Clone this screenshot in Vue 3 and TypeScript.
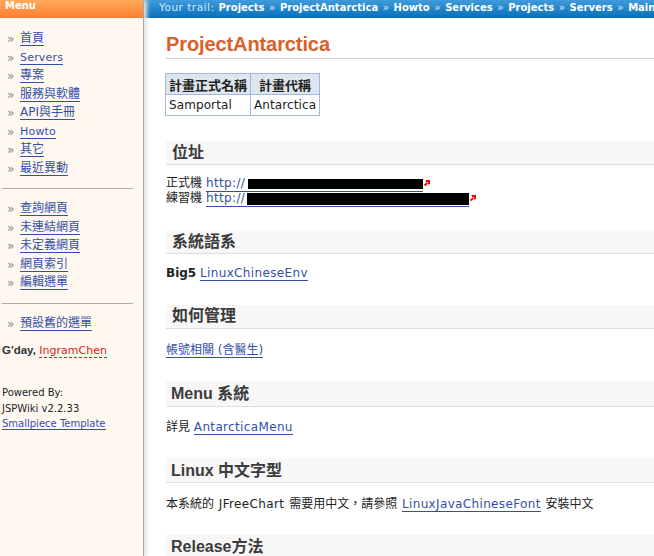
<script setup lang="ts">
interface Item { t: string; lat?: boolean }
const menu1: Item[] = [
  { t: '首頁' }, { t: 'Servers', lat: true }, { t: '專案' }, { t: '服務與軟體' },
  { t: 'API與手冊' }, { t: 'Howto', lat: true }, { t: '其它' }, { t: '最近異動' },
]
const menu2: string[] = ['查詢網頁', '未連結網頁', '未定義網頁', '網頁索引', '編輯選單']
const trail: string[] = ['Projects', 'ProjectAntarctica', 'Howto', 'Services', 'Projects', 'Servers', 'Main']
</script>

<template>
  <div class="page">
    <aside class="side">
      <div class="menu-bar">Menu</div>
      <div class="side-body">
        <ul class="list">
          <li v-for="m in menu1" :key="m.t"><span class="mark">»</span><a class="lnk" :class="{ lat: m.lat }">{{ m.t }}</a></li>
        </ul>
        <hr class="rule" />
        <ul class="list">
          <li v-for="m in menu2" :key="m"><span class="mark">»</span><a class="lnk">{{ m }}</a></li>
        </ul>
        <hr class="rule" />
        <ul class="list one">
          <li><span class="mark">»</span><a class="lnk">預設舊的選單</a></li>
        </ul>
        <div class="gday"><b>G'day,</b> <span class="user">IngramChen</span></div>
        <div class="powered">
          <div>Powered By:</div>
          <div>JSPWiki v2.2.33</div>
          <div><a class="lnk">Smallpiece Template</a></div>
        </div>
      </div>
    </aside>
    <div class="right">
      <div class="trail">
        <span class="your">Your trail:</span>
        <template v-for="(t, i) in trail" :key="i">
          <span v-if="i > 0" class="sep">»</span><b class="crumb">{{ t }}</b>
        </template>
      </div>
      <main class="content">
        <h1 class="title">ProjectAntarctica</h1>
        <table class="tbl">
          <thead>
            <tr><th class="c1">計畫正式名稱</th><th class="c2">計畫代稱</th></tr>
          </thead>
          <tbody>
            <tr><td>Samportal</td><td>Antarctica</td></tr>
          </tbody>
        </table>

        <h2 class="hd first">位址</h2>
        <div class="urls">
          <div class="url">正式機 <a class="lnk wide">http://<span class="black b1"></span></a><svg class="ext" width="6" height="6" viewBox="0 0 6 6"><path d="M0.6 5.6 L3.2 3 M1.8 1 H5 V4.2" fill="none" stroke="#f00" stroke-width="2" /></svg></div>
          <div class="url">練習機 <a class="lnk wide">http://<span class="black b2"></span></a><svg class="ext" width="6" height="6" viewBox="0 0 6 6"><path d="M0.6 5.6 L3.2 3 M1.8 1 H5 V4.2" fill="none" stroke="#f00" stroke-width="2" /></svg></div>
        </div>

        <h2 class="hd s2">系統語系</h2>
        <p class="para p2"><b>Big5</b> <a class="lnk wide">LinuxChineseEnv</a></p>

        <h2 class="hd s3">如何管理</h2>
        <p class="para p3"><a class="lnk">帳號相關 (含醫生)</a></p>

        <h2 class="hd s4">Menu 系統</h2>
        <p class="para p4">詳見 <a class="lnk wide">AntarcticaMenu</a></p>

        <h2 class="hd s5">Linux 中文字型</h2>
        <p class="para p5">本系統的 <span class="wide">JFreeChart</span> 需要用中文，請參照 <a class="lnk wide">LinuxJavaChineseFont</a> 安裝中文</p>

        <h2 class="hd s6">Release方法</h2>
      </main>
    </div>
  </div>
</template>

<style>
html, body { margin: 0; padding: 0; background: #fff; }
</style>

<style scoped>
.page {
  display: flex;
  width: 654px;
  height: 556px;
  overflow: hidden;
  font-family: "DejaVu Sans", "Noto Sans CJK TC", sans-serif;
  font-size: 12px;
  color: #222;
  background: #fff;
}
.side {
  flex: 0 0 143px;
  width: 143px;
  height: 556px;
  background: #fff8f1;
  border-right: 1px solid #a8a8a8;
  box-shadow: 3px 0 4px #e4e4e4;
  position: relative;
  z-index: 1;
}
.menu-bar {
  height: 17px;
  padding-left: 5px;
  font: bold 10px/12px "DejaVu Sans", sans-serif;
  color: #fff;
  background: linear-gradient(#ffa95c, #ff8133);
  border-bottom: 1px solid #e87a3c;
  overflow: hidden;
}
.side-body { padding: 12px 2px 0; }
.list { list-style: none; margin: 0; padding: 0; }
.list li {
  display: flex;
  align-items: center;
  height: 18.5px;
  padding-left: 5px;
  white-space: nowrap;
}
.mark {
  width: 13px;
  color: #888;
  font-size: 12px;
  line-height: 12px;
}
.lnk {
  color: #3350a8;
  border-bottom: 1px solid #3350a8;
  line-height: 13px;
  display: inline-block;
}
.lnk.lat { font-size: 11px; letter-spacing: 0.2px; }
.wide { letter-spacing: 0.35px; }
.rule {
  border: 0;
  height: 1px;
  background: #b0aca8;
  margin: 10px 0 11px;
  width: 131px;
}
.gday { margin-top: 11px; white-space: nowrap; font-size: 11px; }
.gday b { font-family: "Liberation Sans", sans-serif; font-size: 11.5px; color: #333; }
.user { color: #e02020; border-bottom: 1px dashed #e02020; }
.powered {
  margin-top: 28px;
  font-size: 10px;
  line-height: 15.5px;
  color: #222;
  white-space: nowrap;
}
.powered .lnk { line-height: 11px; }
.right { flex: 1; min-width: 0; }
.trail {
  height: 17px;
  line-height: 15px;
  padding-left: 15px;
  font-size: 10.5px;
  color: #fff;
  background: linear-gradient(#3f9bdb, #0a72bd);
  border-bottom: 1px solid #0d69ad;
  white-space: nowrap;
  overflow: hidden;
}
.your { color: #d5e8f6; margin-right: 4px; letter-spacing: 0.5px; }
.sep { margin: 0 4.5px; color: #dcecf8; }
.crumb { font-size: 10px; }
.content { padding: 0 0 0 22px; }
.title {
  margin: 0;
  padding-top: 14px;
  height: 26px;
  font: bold 20px/24px "Liberation Sans", sans-serif;
  letter-spacing: -0.1px;
  color: #d9602a;
  border-bottom: 1px solid #d0d0d0;
}
.tbl {
  margin: 14px 0 0 -1px;
  width: 152px;
  table-layout: fixed;
  border-collapse: collapse;
  border: 1px solid #a3b6e6;
}
.c1 { width: 78px; }
.c2 { width: 62px; }
.tbl th, .tbl td {
  border: 1px solid #a3b6e6;
  padding: 0 3px;
  white-space: nowrap;
}
.tbl th { height: 20px; background: #dce6ec; color: #222; font-weight: bold; font-size: 13px; }
.tbl td { height: 20px; color: #222; text-align: left; font-size: 12px; letter-spacing: 0.1px; }
.hd {
  margin: 0;
  padding-left: 6px;
  background: #f7f7f7;
  border-bottom: 1px solid #dedede;
  color: #3c3c3c;
  font: bold 16px/23px "Liberation Sans", "Noto Sans CJK TC", sans-serif;
  white-space: nowrap;
  overflow: hidden;
}
.hd.first { margin-top: 25px; height: 23px; }
.urls { margin-top: 11px; line-height: 15px; }
.url { height: 15px; white-space: nowrap; display: flex; align-items: flex-start; }
.url > .lnk { margin-left: 4px; display: inline-flex; align-items: center; height: 15px; line-height: 15px; }
.black { display: inline-block; background: #000; }
.b1 { width: 175px; height: 10px; margin-left: 3px; }
.b2 { width: 222px; height: 12px; margin-left: 2px; }
.ext { margin: 4px 0 0 1px; }
.hd.s2 { margin-top: 24px; height: 23px; }
.hd.s3 { margin-top: 24px; height: 23px; line-height: 22px; }
.hd.s4 { margin-top: 23px; height: 25px; line-height: 25px; padding-left: 5px; }
.hd.s5 { margin-top: 23px; height: 24px; line-height: 25px; padding-left: 5px; }
.hd.s6 { margin-top: 23px; height: 24px; line-height: 24px; padding-left: 5px; }
.para { height: 15px; line-height: 15px; white-space: nowrap; margin: 0; }
.p2 { margin-top: 12px; }
.p3 { margin-top: 14px; }
.p4 { margin-top: 13px; }
.p5 { margin-top: 14px; word-spacing: 1px; }
.para b { font-weight: bold; }
.para .lnk { line-height: 14px; }
</style>
